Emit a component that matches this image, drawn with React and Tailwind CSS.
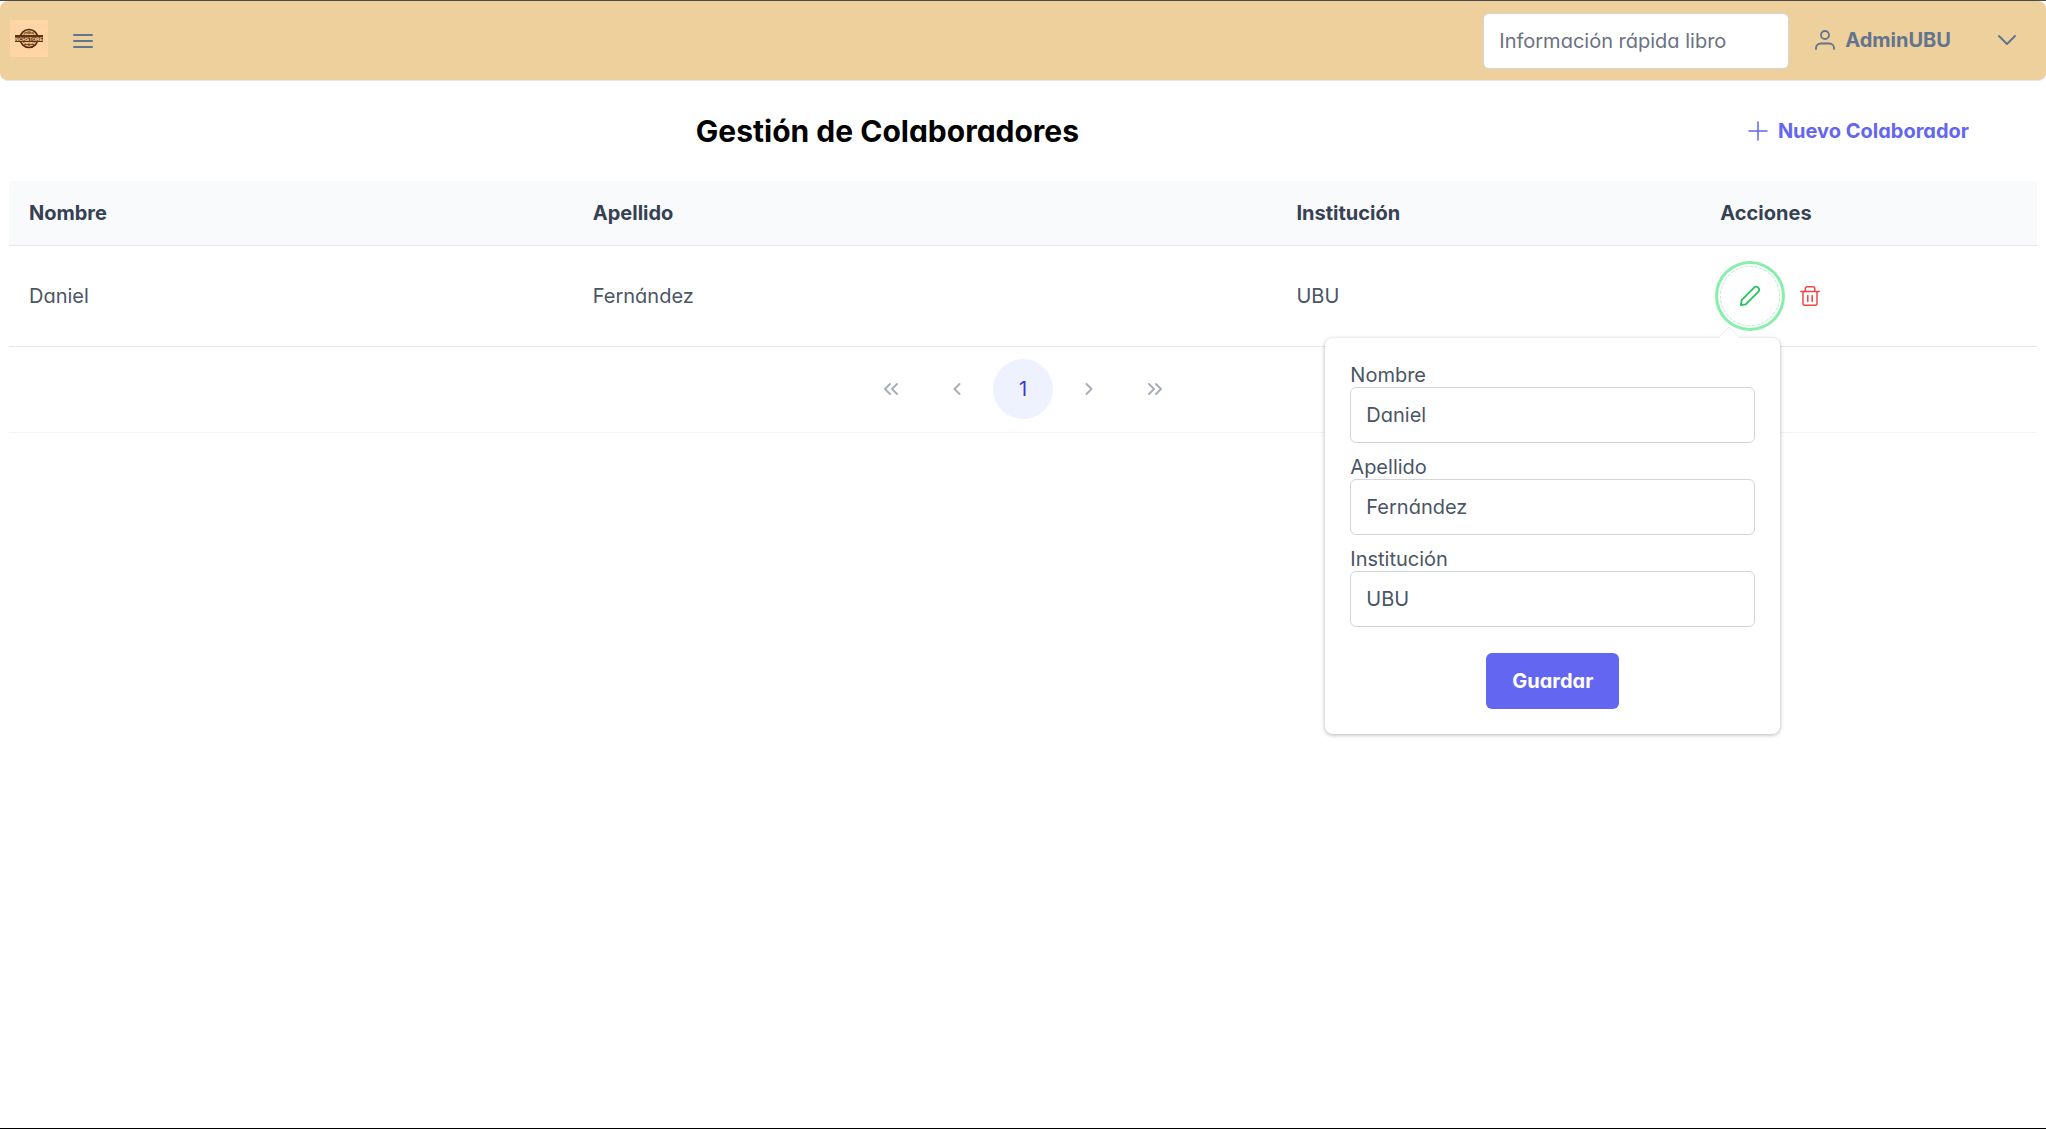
import React, { useState } from "react";

const stroke = { fill: "none", stroke: "currentColor", strokeLinecap: "round", strokeLinejoin: "round" };

function Icon({ children, width = 1.5, className = "size-5" }) {
  return (
    <svg viewBox="0 0 20 20" className={className} {...stroke} strokeWidth={width} aria-hidden="true">
      {children}
    </svg>
  );
}

function Logo() {
  return (
    <svg viewBox="0 0 38 37" className="h-[37px] w-[38px]" role="img" aria-label="Logo">
      <rect width="38" height="37" fill="#ffd5a5" />
      <circle cx="19" cy="18.500" r="9" fill="#eab982" stroke="#4f2810" strokeWidth="1.600" />
      <circle cx="19" cy="18.500" r="6.500" fill="none" stroke="#8a5a33" strokeWidth="1" strokeDasharray="2 1" />
      <path d="M14 13h10M14 24.500h10M19 11v3M19 23v3" stroke="#7a4a26" strokeWidth="1" />
      <rect x="5" y="15" width="28" height="7" fill="#5f3214" />
      <text x="19" y="20.500" textAnchor="middle" fontSize="5" textRendering="geometricPrecision" fontWeight="700" fill="#ffe0b8" fontFamily="Liberation Sans, sans-serif">
        NCHSTORE
      </text>
    </svg>
  );
}

function Field({ id, label, value }) {
  const [text, setText] = useState(value);
  return (
    <div className="flex flex-col">
      <label htmlFor={id} className="leading-6">{label}</label>
      <input
        id={id}
        value={text}
        onChange={(e) => setText(e.target.value)}
        className="h-14 w-full rounded-md border border-gray-300 bg-white px-[15px] text-gray-600 outline-none"
      />
    </div>
  );
}

function PageButton({ label, active, children }) {
  return (
    <button
      type="button"
      aria-label={label}
      className={active
        ? "grid size-[60px] place-items-center rounded-full bg-[#eef2ff] text-[#4338ca]"
        : "grid size-[60px] place-items-center rounded-full text-[#a9adb6]"}
    >
      {children}
    </button>
  );
}

export default function App() {
  return (
    <div className="flex min-h-screen flex-col border-t border-b border-t-[#4a4a4f] border-b-black bg-white font-['Inter',sans-serif] text-xl text-gray-600 [font-feature-settings:'cv11']">
      <header className="flex h-20 items-center rounded-lg border-b border-[#e5e7eb] bg-[#eed09d] pr-[29px] pl-[10px]">
        <div className="pb-1">
          <Logo />
        </div>
        <button type="button" aria-label="Menú" className="ml-[25px] text-slate-500">
          <Icon width={2}>
            <path d="M1 4h18M1 10h18M1 16h18" />
          </Icon>
        </button>
        <input
          aria-label="Información rápida libro"
          placeholder="Información rápida libro"
          className="ml-auto h-14 w-[306px] rounded-md border border-gray-300 bg-white px-[15px] outline-none placeholder:text-gray-500"
        />
        <button type="button" className="ml-[26px] flex items-center pb-0.5 text-slate-500">
          <Icon className="mr-[10px] size-5" width={1.8}>
            <circle cx="10" cy="5" r="4" />
            <path d="M1 19v-1a4.500 4.500 0 0 1 4.500-4.500h9A4.500 4.500 0 0 1 19 18v1" />
          </Icon>
          <span className="font-bold">AdminUBU</span>
          <Icon className="ml-[46px] size-5" width={2}>
            <path d="M2 6l8 8 8-8" />
          </Icon>
        </button>
      </header>

      <main className="px-[9px]">
        <div className="flex h-[100px] items-center px-[43px]">
          <h1 className="flex-1 text-center text-3xl font-bold text-black">Gestión de Colaboradores</h1>
          <button type="button" className="flex items-center gap-[10px] px-[25px] py-3 font-bold text-[#6366f1]">
            <Icon>
              <path d="M10 1v18M1 10h18" />
            </Icon>
            Nuevo Colaborador
          </button>
        </div>

        <table className="w-full table-fixed text-left">
          <colgroup>
            <col className="w-[27.8%]" />
            <col className="w-[34.7%]" />
            <col className="w-[20.9%]" />
            <col />
          </colgroup>
          <thead>
            <tr className="h-16 border-b border-gray-200 bg-[#f9fafb] text-gray-700">
              <th className="px-5 font-bold">Nombre</th>
              <th className="px-5 font-bold">Apellido</th>
              <th className="px-5 font-bold">Institución</th>
              <th className="px-5 font-bold">Acciones</th>
            </tr>
          </thead>
          <tbody>
            <tr className="h-[101px] border-b border-gray-200">
              <td className="px-5">Daniel</td>
              <td className="px-5">Fernández</td>
              <td className="px-5">UBU</td>
              <td className="px-5">
                <div className="relative flex w-fit items-center">
                  <button
                    type="button"
                    aria-label="Editar"
                    className="grid size-[60px] place-items-center rounded-full border border-dashed border-[#cfe6da] text-[#22c55e] shadow-[0_0_0_2px_#ffffff,0_0_0_5px_#86efac]"
                  >
                    <Icon width={1.8}>
                      <path d="M.9 19.100l.7-5L14 1.700a2.900 2.900 0 0 1 4.200 4.200L5.700 18.400z" />
                    </Icon>
                  </button>
                  <button type="button" aria-label="Eliminar" className="ml-5 text-[#ef4444]">
                    <Icon>
                      <path d="M.8 5.500h18.400M3 5.500v12a1.800 1.800 0 0 0 1.800 1.800h10.400a1.800 1.800 0 0 0 1.800-1.800v-12M5.300 5.500V2.500A1.800 1.800 0 0 1 7 .8h6a1.800 1.800 0 0 1 1.800 1.700v3M7.800 9.500v6M12.200 9.500v6" />
                    </Icon>
                  </button>

                  <form
                    onSubmit={(e) => e.preventDefault()}
                    className="absolute top-[72px] right-10 z-10 flex w-[455px] flex-col gap-3 rounded-lg bg-white p-[25px] shadow-[0_1px_4px_rgba(0,0,0,0.3)]"
                  >
                    <svg viewBox="0 0 24 12" className="absolute -top-[11px] right-[39px] h-3 w-6" aria-hidden="true">
                      <path d="M0 12L12 0l12 12z" fill="#fff" />
                      <path d="M1 11L12 0l11 11" fill="none" stroke="#ececec" strokeWidth="1" />
                    </svg>
                    <Field id="nombre" label="Nombre" value="Daniel" />
                    <Field id="apellido" label="Apellido" value="Fernández" />
                    <Field id="institucion" label="Institución" value="UBU" />
                    <button type="submit" className="mt-3.5 h-14 self-center rounded-md bg-[#6366f1] px-[26px] font-bold text-white">
                      Guardar
                    </button>
                  </form>
                </div>
              </td>
            </tr>
          </tbody>
        </table>

        <nav aria-label="Paginación" className="flex h-[86px] items-center justify-center gap-1.5 border-b border-gray-100">
          <PageButton label="Primera página">
            <Icon width={2}><path d="M9 5l-5 5 5 5M16 5l-5 5 5 5" /></Icon>
          </PageButton>
          <PageButton label="Página anterior">
            <Icon width={2}><path d="M12.500 5l-5 5 5 5" /></Icon>
          </PageButton>
          <PageButton label="Página 1" active>1</PageButton>
          <PageButton label="Página siguiente">
            <Icon width={2}><path d="M7.500 5l5 5-5 5" /></Icon>
          </PageButton>
          <PageButton label="Última página">
            <Icon width={2}><path d="M4 5l5 5-5 5M11 5l5 5-5 5" /></Icon>
          </PageButton>
        </nav>
      </main>
    </div>
  );
}
